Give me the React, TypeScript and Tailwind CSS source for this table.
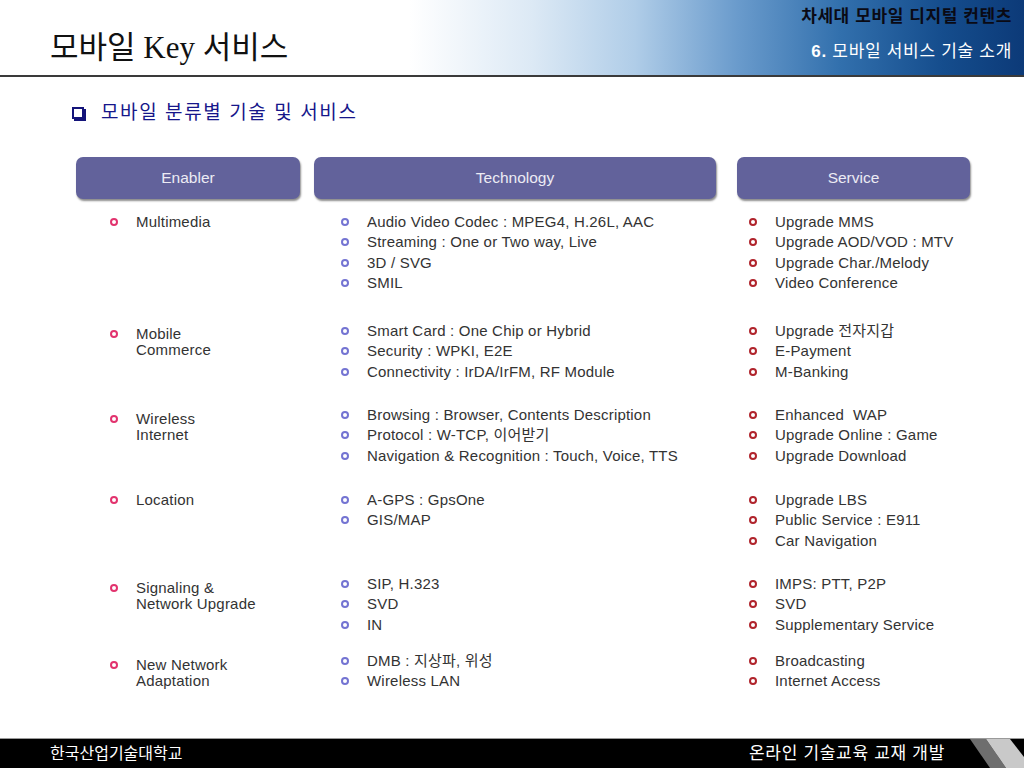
import React from 'react';

type Row = {
  h: string;
  enabler: string[];
  ePad: string;
  tech: string[];
  service: string[];
};

const rows: Row[] = [
  {
    h: 'h-[109px]',
    enabler: ['Multimedia'],
    ePad: 'pt-[2px]',
    tech: ['Audio Video Codec : MPEG4, H.26L, AAC', 'Streaming : One or Two way, Live', '3D / SVG', 'SMIL'],
    service: ['Upgrade MMS', 'Upgrade AOD/VOD : MTV', 'Upgrade Char./Melody', 'Video Conference'],
  },
  {
    h: 'h-[84px]',
    enabler: ['Mobile', 'Commerce'],
    ePad: 'pt-[5px]',
    tech: ['Smart Card : One Chip or Hybrid', 'Security : WPKI, E2E', 'Connectivity : IrDA/IrFM, RF Module'],
    service: ['Upgrade 전자지갑', 'E-Payment', 'M-Banking'],
  },
  {
    h: 'h-[85px]',
    enabler: ['Wireless', 'Internet'],
    ePad: 'pt-[6px]',
    tech: ['Browsing : Browser, Contents Description', 'Protocol : W-TCP, 이어받기', 'Navigation & Recognition : Touch, Voice, TTS'],
    service: ['Enhanced  WAP', 'Upgrade Online : Game', 'Upgrade Download'],
  },
  {
    h: 'h-[84px]',
    enabler: ['Location'],
    ePad: 'pt-[2px]',
    tech: ['A-GPS : GpsOne', 'GIS/MAP'],
    service: ['Upgrade LBS', 'Public Service : E911', 'Car Navigation'],
  },
  {
    h: 'h-[77px]',
    enabler: ['Signaling &', 'Network Upgrade'],
    ePad: 'pt-[6px]',
    tech: ['SIP, H.323', 'SVD', 'IN'],
    service: ['IMPS: PTT, P2P', 'SVD', 'Supplementary Service'],
  },
  {
    h: 'h-[80px]',
    enabler: ['New Network', 'Adaptation'],
    ePad: 'pt-[6px]',
    tech: ['DMB : 지상파, 위성', 'Wireless LAN'],
    service: ['Broadcasting', 'Internet Access'],
  },
];

function Ring({ color }: { color: string }) {
  return <span className={`block w-[8px] h-[8px] rounded-full border-2 ${color}`} />;
}

function List({ items, ring }: { items: string[]; ring: string }) {
  return (
    <div className="flex flex-col">
      {items.map((t, i) => (
        <div key={i} className="flex items-center h-[20.3px]">
          <div className="w-[26px] flex items-center">
            <Ring color={ring} />
          </div>
          <span className="whitespace-pre">{t}</span>
        </div>
      ))}
    </div>
  );
}

function HeadBox({ label, w }: { label: string; w: string }) {
  return (
    <div
      className={`${w} h-[42px] rounded-[7px] bg-[#62629b] flex items-center justify-center text-[15.5px] text-[#ecebf4] shadow-[1px_2px_2px_rgba(0,0,0,0.45)]`}
    >
      {label}
    </div>
  );
}

export default function App() {
  return (
    <div
      className="w-[1024px] h-[768px] bg-white flex flex-col overflow-hidden"
      style={{ fontFamily: '"Liberation Sans", Arial, "Noto Sans CJK KR", sans-serif' }}
    >
      {/* header */}
      <div className="h-[75px] shrink-0 flex justify-between bg-[linear-gradient(90deg,#ffffff_0%,#ffffff_40%,#dce9f5_52%,#b0cde8_62%,#6a9bcc_72%,#3270ad_82%,#154d8d_92%,#0c3a78_100%)]">
        <div
          className="pl-[50px] pt-[30px] text-[31px] leading-[36px] text-[#111]"
          style={{ fontFamily: '"Liberation Serif", "Times New Roman", "Noto Sans CJK KR", serif' }}
        >
          모바일 Key 서비스
        </div>
        <div className="flex flex-col items-end pr-[12px] pt-[6px] gap-[13px]">
          <div className="text-[17px] font-bold text-[#0a0a14] leading-[22px] tracking-[0.6px]">차세대 모바일 디지털 컨텐츠</div>
          <div className="text-[17px] text-white leading-[22px] tracking-[0.7px]">
            <span className="font-bold">6.</span> 모바일 서비스 기술 소개
          </div>
        </div>
      </div>
      <div className="h-[2px] shrink-0 bg-[#3a3a3a]" />

      {/* content */}
      <div className="flex-1 flex flex-col">
        <div className="mt-[24px] pl-[72px] flex items-center h-[24px] text-[19px] tracking-[1.6px] text-[#16168a]">
          <span className="w-[12px] h-[12px] border-2 border-[#14147a] bg-white shadow-[2px_2px_0_#14147a]" />
          <span className="ml-[17px]">모바일 분류별 기술 및 서비스</span>
        </div>

        <div className="mt-[32px] pl-[76px] flex">
          <HeadBox label="Enabler" w="w-[224px]" />
          <div className="w-[14px]" />
          <HeadBox label="Technology" w="w-[402px]" />
          <div className="w-[21px]" />
          <HeadBox label="Service" w="w-[233px]" />
        </div>

        <div className="mt-[13px] pl-[76px] flex flex-col text-[15px] tracking-[0.2px] text-[#333333]">
          {rows.map((r, i) => (
            <div key={i} className={`flex ${r.h}`}>
              <div className={`w-[238px] pl-[34px] ${r.ePad}`}>
                <div className="flex">
                  <div className="w-[26px] h-[16px] flex items-center">
                    <Ring color="border-[#e2336e]" />
                  </div>
                  <div className="leading-[16px]">
                    {r.enabler.map((t, j) => (
                      <div key={j}>{t}</div>
                    ))}
                  </div>
                </div>
              </div>
              <div className="w-[423px] pl-[27px]">
                <List items={r.tech} ring="border-[#7474d2]" />
              </div>
              <div className="w-[233px] pl-[12px]">
                <List items={r.service} ring="border-[#b0242c]" />
              </div>
            </div>
          ))}
        </div>
      </div>

      {/* footer */}
      <div className="h-[1px] shrink-0 bg-[#9a9a9a]" />
      <div className="relative h-[29px] shrink-0 bg-black flex items-center justify-between text-white">
        <span className="pl-[50px] text-[16px]">한국산업기술대학교</span>
        <span className="pr-[79px] text-[17px] tracking-[0.7px]">온라인 기술교육 교재 개발</span>
        <svg className="absolute right-0 top-0" width="80" height="29" viewBox="0 0 80 29">
          <polygon points="26,0 42,0 62,29 46,29" fill="#6e6e6e" />
          <polygon points="42,0 66,0 80,18 80,29 62,29" fill="#c9c9c9" />
        </svg>
      </div>
    </div>
  );
}
